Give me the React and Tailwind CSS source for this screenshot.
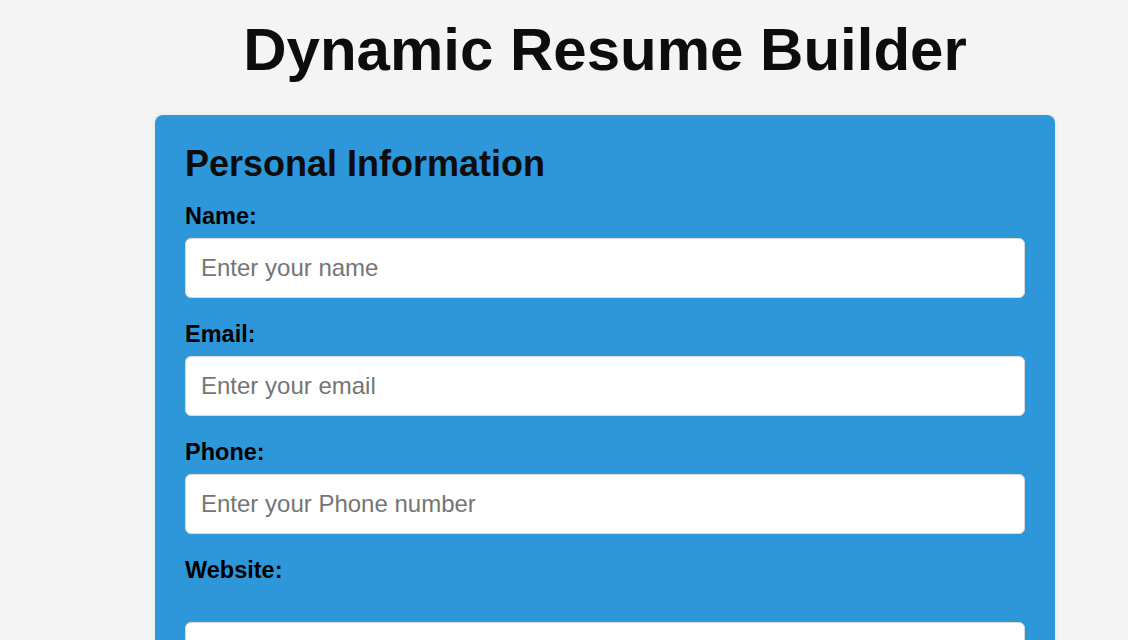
export default function App() {
  const fields = [
    { label: 'Name:', placeholder: 'Enter your name', type: 'text' },
    { label: 'Email:', placeholder: 'Enter your email', type: 'email' },
    { label: 'Phone:', placeholder: 'Enter your Phone number', type: 'tel' },
  ];

  return (
    <div className="min-h-screen bg-[#f4f4f4] font-['Liberation_Sans',Arial,sans-serif] overflow-hidden">
      <div className="w-[900px] ml-[155px]">
        <h1 className="text-center text-[60px] font-bold leading-[69px] text-[#0d0d0d] pt-[15px] pb-[31px]">
          Dynamic Resume Builder
        </h1>

        {/* Personal info card */}
        <div className="bg-[#2e97d9] rounded-lg px-[30px] pt-[28px] pb-[30px] shadow-[0_0_6px_rgba(0,0,0,0.06)]">
          <h2 className="text-[36px] font-bold leading-[41px] text-[#0d0d0d] mb-[19px]">Personal Information</h2>

          {fields.map((f) => (
            <div key={f.label} className="mb-[23px]">
              <label className="block text-[23.5px] font-bold leading-[27px] text-black mb-[8px]">{f.label}</label>
              <input
                type={f.type}
                placeholder={f.placeholder}
                className="w-full h-[60px] bg-white rounded-md border border-[#d9d9d9] px-[15px] text-[24px] text-black placeholder:text-[#757575] outline-none"
              />
            </div>
          ))}

          <div>
            <label className="block text-[23.5px] font-bold leading-[27px] text-black mb-[38px]">Website:</label>
            <input
              type="url"
              placeholder="Enter your website"
              className="w-full h-[60px] bg-white rounded-md border border-[#d9d9d9] px-[15px] text-[24px] text-black placeholder:text-[#757575] outline-none"
            />
          </div>
        </div>
      </div>
    </div>
  );
}
